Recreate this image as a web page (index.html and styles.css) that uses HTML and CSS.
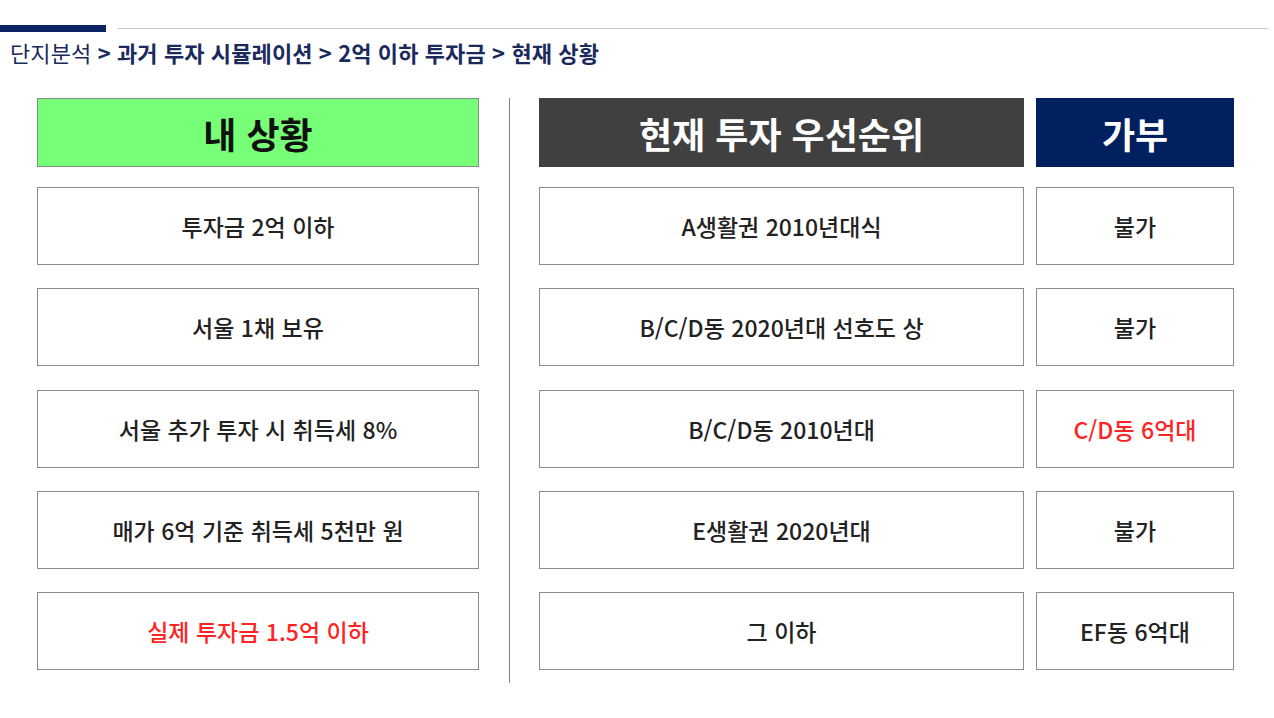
FILE: index.html
```html
<!DOCTYPE html>
<html lang="ko">
<head>
<meta charset="utf-8">
<link rel="stylesheet" href="styles.css">
</head>
<body>
<div class="topbar">
  <div class="accent"></div>
  <div class="rule"></div>
</div>
<div class="crumbs"><span class="first">단지분석</span> &gt; 과거 투자 시뮬레이션 &gt; 2억 이하 투자금 &gt; 현재 상황</div>
<div class="main">
  <div class="col col-left">
    <div class="head head-green">내 상황</div>
    <div class="cell">투자금 2억 이하</div>
    <div class="cell">서울 1채 보유</div>
    <div class="cell">서울 추가 투자 시 취득세 8%</div>
    <div class="cell">매가 6억 기준 취득세 5천만 원</div>
    <div class="cell red">실제 투자금 1.5억 이하</div>
  </div>
  <div class="divider"></div>
  <div class="col col-mid">
    <div class="head head-dark">현재 투자 우선순위</div>
    <div class="cell">A생활권 2010년대식</div>
    <div class="cell">B/C/D동 2020년대 선호도 상</div>
    <div class="cell">B/C/D동 2010년대</div>
    <div class="cell">E생활권 2020년대</div>
    <div class="cell">그 이하</div>
  </div>
  <div class="col col-right">
    <div class="head head-navy">가부</div>
    <div class="cell">불가</div>
    <div class="cell">불가</div>
    <div class="cell red">C/D동 6억대</div>
    <div class="cell">불가</div>
    <div class="cell">EF동 6억대</div>
  </div>
</div>
</body>
</html>
```

FILE: styles.css
```css
* { box-sizing: border-box; }
body {
  margin: 0;
  background: #fff;
  font-family: "Noto Sans CJK KR", "Noto Sans", sans-serif;
  color: #222;
  width: 1274px;
  height: 718px;
  overflow: hidden;
}
.topbar {
  display: flex;
  align-items: center;
  padding-top: 25px;
  height: 32px;
}
.accent {
  width: 106px;
  height: 7px;
  background: #0d2462;
}
.rule {
  margin-left: 12px;
  width: 1150px;
  height: 1px;
  background: #c8c8c8;
}
.crumbs {
  margin: 5px 0 0 10px;
  font-size: 22px;
  font-weight: 700;
  color: #1b2a5c;
  letter-spacing: 0.1px;
  line-height: 30px;
}
.crumbs .first { font-weight: 400; }
.main {
  display: flex;
  margin-top: 31px;
  margin-left: 37px;
}
.col {
  display: flex;
  flex-direction: column;
  gap: 23.25px;
}
.col-left { width: 442px; }
.col-mid { width: 485px; }
.col-right { width: 198px; margin-left: 12px; }
.divider {
  width: 1px;
  height: 585px;
  background: #808080;
  margin: 0 29px 0 30px;
}
.head {
  height: 69px;
  margin-bottom: -3.25px;
  display: flex;
  align-items: center;
  justify-content: center;
  font-size: 36px;
  font-weight: 700;
  border: 1px solid #8a8a8a;
}
.head-green { background: #77ff77; color: #111; }
.head-dark { background: #404040; color: #fff; border-color: #404040; }
.head-navy { background: #002060; color: #fff; border-color: #002060; }
.cell {
  height: 78px;
  border: 1px solid #8c8c8c;
  display: flex;
  align-items: center;
  justify-content: center;
  font-size: 23px;
  font-weight: 500;
  color: #222;
}
.cell.red { color: #ff2424; }
```
